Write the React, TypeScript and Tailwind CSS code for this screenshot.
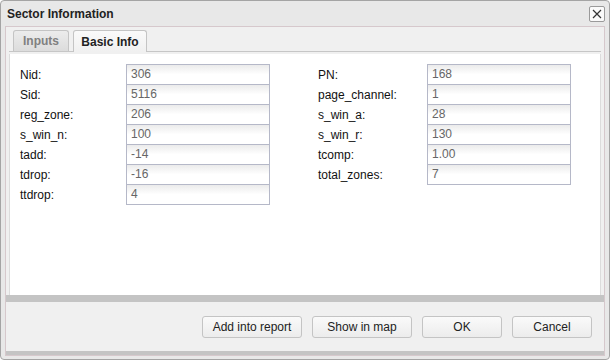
import React from "react"

const left = [
  ["Nid:", "306"],
  ["Sid:", "5116"],
  ["reg_zone:", "206"],
  ["s_win_n:", "100"],
  ["tadd:", "-14"],
  ["tdrop:", "-16"],
  ["ttdrop:", "4"],
]

const right = [
  ["PN:", "168"],
  ["page_channel:", "1"],
  ["s_win_a:", "28"],
  ["s_win_r:", "130"],
  ["tcomp:", "1.00"],
  ["total_zones:", "7"],
]

function Field({ label, value, first, lw }: { label: string; value: string; first: boolean; lw: string }) {
  return (
    <div className={`flex items-center ${first ? "" : "-mt-px"}`}>
      <div className={`${lw} text-[12px] text-[#111]`}>{label}</div>
      <div className="h-[21px] w-[144px] border border-[#b5b8c8] bg-gradient-to-b from-[#ebebeb] via-white to-white px-[4px] text-[12px] leading-[19px] text-[#666]">
        {value}
      </div>
    </div>
  )
}

function Btn({ label, w }: { label: string; w: string }) {
  return (
    <button
      className={`${w} h-[22px] rounded-[3px] border border-[#c4c4c4] bg-gradient-to-b from-[#fafafa] to-[#ececec] text-[12px] text-[#222]`}
    >
      {label}
    </button>
  )
}

export default function App() {
  return (
    <div
      className="w-[610px] h-[360px] rounded-[4px] border border-[#a4a4a4] bg-[#e8e8e8] flex flex-col"
      style={{ fontFamily: '"Liberation Sans", Arial, sans-serif' }}
    >
      <div className="h-[25px] flex items-center justify-between pl-[6px] pr-[4px]">
        <span className="text-[12px] font-bold text-[#222]">Sector Information</span>
        <button className="w-[16px] h-[16px] rounded-[2px] border border-[#9a9a9a] bg-[#fafafa] flex items-center justify-center">
          <svg width="10" height="10" viewBox="0 0 10 10">
            <path d="M1 1L9 9M9 1L1 9" stroke="#333" strokeWidth="1.2" />
          </svg>
        </button>
      </div>

      <div className="mx-[4px] flex-1 flex flex-col border border-[#d6c8cc] bg-[#f0f0f0] mb-[3px]">
        <div className="h-[25px] flex items-end gap-[4px] pl-[4px] mx-[3px] border-b border-[#c6c6c6]">
          <div className="h-[21px] w-[56px] rounded-t-[3px] border border-b-0 border-[#c4c4c4] bg-gradient-to-b from-[#ececec] to-[#dcdcdc] text-[12px] font-bold text-[#808080] flex items-center justify-center">
            Inputs
          </div>
          <div className="h-[22px] w-[74px] -mb-px rounded-t-[3px] border border-b-0 border-[#c4c4c4] bg-gradient-to-b from-[#fafafa] to-[#f0f0f0] text-[12px] font-bold text-[#222] flex items-center justify-center">
            Basic Info
          </div>
        </div>
        <div className="mx-[3px] mt-[2px] flex-1 bg-white border-x border-[#dcdcdc] pl-[10px] pt-[10px] flex gap-[48px]">
          <div className="flex flex-col">
            {left.map(([l, v], i) => (
              <Field key={l} label={l} value={v} first={i === 0} lw="w-[106px]" />
            ))}
          </div>
          <div className="flex flex-col">
            {right.map(([l, v], i) => (
              <Field key={l} label={l} value={v} first={i === 0} lw="w-[109px]" />
            ))}
          </div>
        </div>
        <div className="h-[7px] bg-[#c4c4c4]" />
        <div className="h-[49px] flex items-center justify-end gap-[10px] pr-[12px]">
          <Btn label="Add into report" w="w-[100px]" />
          <Btn label="Show in map" w="w-[100px]" />
          <Btn label="OK" w="w-[80px]" />
          <Btn label="Cancel" w="w-[80px]" />
        </div>
        <div className="h-[4px] bg-[#c4c4c4]" />
      </div>
    </div>
  )
}
